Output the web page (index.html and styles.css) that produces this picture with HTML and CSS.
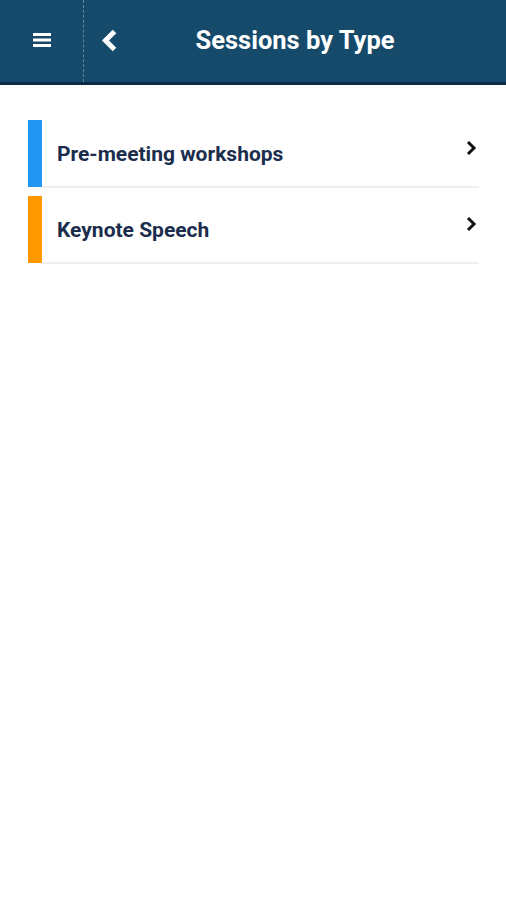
FILE: index.html
```html
<!DOCTYPE html>
<html>
<head>
<meta charset="utf-8">
<link rel="stylesheet" href="styles.css">
</head>
<body>
<header class="bar">
  <div class="menu">
    <svg width="18" height="16" viewBox="0 0 18 16"><rect x="0" y="1" width="18" height="3" fill="#fff"/><rect x="0" y="6.5" width="18" height="3" fill="#fff"/><rect x="0" y="12" width="18" height="3" fill="#fff"/></svg>
  </div>
  <div class="back">
    <svg width="17" height="23" viewBox="0 0 17 23"><path d="M13.5 2.5 L4.5 11.5 L13.5 20.5" fill="none" stroke="#fff" stroke-width="5" stroke-linejoin="miter"/></svg>
  </div>
  <h1 class="title">Sessions by Type</h1>
</header>
<main class="list">
  <div class="item">
    <span class="tag tag-blue"></span>
    <div class="row">
      <span class="label">Pre-meeting workshops</span>
      <svg class="chev" width="11" height="16" viewBox="0 0 11 16"><path d="M2 2 L8 8 L2 14" fill="none" stroke="#111" stroke-width="3"/></svg>
    </div>
  </div>
  <div class="item">
    <span class="tag tag-orange"></span>
    <div class="row">
      <span class="label">Keynote Speech</span>
      <svg class="chev" width="11" height="16" viewBox="0 0 11 16"><path d="M2 2 L8 8 L2 14" fill="none" stroke="#111" stroke-width="3"/></svg>
    </div>
  </div>
</main>
</body>
</html>
```
FILE: styles.css
```css
* { box-sizing: border-box; }
html, body { margin: 0; padding: 0; background: #fff; }
body { font-family: Roboto, "Noto Sans", sans-serif; width: 506px; height: 900px; }
.bar {
  height: 85px;
  background: #164a6b;
  border-bottom: 3px solid #0f2a45;
  display: flex;
  align-items: center;
}
.menu {
  width: 84px;
  height: 82px;
  border-right: 1px dashed #5b88a6;
  display: flex;
  align-items: center;
  justify-content: center;
  padding-bottom: 2px;
}
.back {
  width: 50px;
  display: flex;
  align-items: center;
  justify-content: center;
  padding-bottom: 2px;
}
.title {
  margin: 0;
  flex: 1;
  color: #fff;
  font-size: 25.5px;
  font-weight: 700;
  text-align: center;
  padding-right: 50px;
  padding-bottom: 2px;
}
.list {
  padding: 35px 27px 0 28px;
  display: flex;
  flex-direction: column;
  gap: 8px;
}
.item {
  display: flex;
  height: 68px;
}
.tag { width: 14px; flex: none; height: 67px; }
.tag-blue { background: #2196f3; }
.tag-orange { background: #ff9800; }
.row {
  flex: 1;
  display: flex;
  align-items: center;
  justify-content: space-between;
  border-bottom: 2px solid #eeeeee;
  padding-left: 15px;
  padding-right: 2px;
}
.label {
  color: #1b2d4d;
  font-size: 21px;
  font-weight: 700;
  margin-top: 1px;
}
.chev { margin-top: -10px; }
```
